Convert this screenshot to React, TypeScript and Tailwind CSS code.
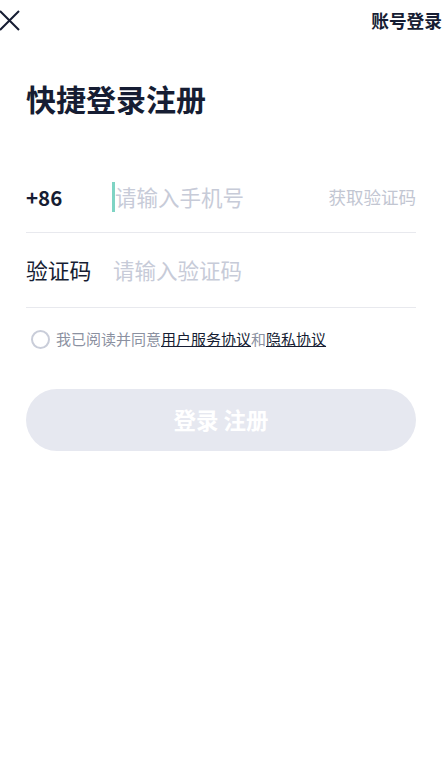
import React from "react";

export default function App() {
  const font = { fontFamily: '"Noto Sans CJK SC", "Noto Sans", sans-serif' };
  return (
    <div className="w-[442px] h-[774px] bg-white text-[#161d33]" style={font}>
      <div className="flex h-[42px] items-start justify-between">
        <svg width="20" height="22" viewBox="0 0 20 22" className="mt-[10px] ml-0">
          <path d="M0 1 L19 20 M19 1 L0 20" stroke="#161d33" strokeWidth="2" fill="none" />
        </svg>
        <span className="mt-[8px] text-[17.7px] font-bold leading-[24px]">账号登录</span>
      </div>
      <div className="px-[26px]">
        <h1 className="mt-[36px] text-[30px] font-bold leading-[40px]">快捷登录注册</h1>
        <div className="mt-[41px] flex h-[74px] items-center border-b border-[#e8e9ee] pt-[3px]">
          <span className="w-[86px] text-[20.5px] font-bold">+86</span>
          <div className="flex flex-1 items-center">
            <span className="h-[30px] w-[3px] bg-[#7fd4c4]" />
            <span className="text-[21.5px] text-[#c7cbd8]">请输入手机号</span>
          </div>
          <span className="text-[17.5px] text-[#c2c6d2]">获取验证码</span>
        </div>
        <div className="flex h-[75px] items-center border-b border-[#e8e9ee]">
          <span className="w-[87px] text-[21.8px]">验证码</span>
          <span className="text-[21.5px] text-[#c7cbd8]">请输入验证码</span>
        </div>
        <div className="mt-[20px] flex items-center pl-[5px]">
          <span className="h-[19px] w-[19px] rounded-full border-2 border-[#c9cdd9]" />
          <span className="ml-[6px] text-[15px] leading-[22px] text-[#8b91a1]">
            我已阅读并同意<span className="text-[#161d33] underline">用户服务协议</span>和
            <span className="text-[#161d33] underline">隐私协议</span>
          </span>
        </div>
        <button className="mt-[39px] flex h-[62px] w-full items-center justify-center rounded-full bg-[#e6e8f0] text-[22.5px] font-bold text-white">
          登录 注册
        </button>
      </div>
    </div>
  );
}
